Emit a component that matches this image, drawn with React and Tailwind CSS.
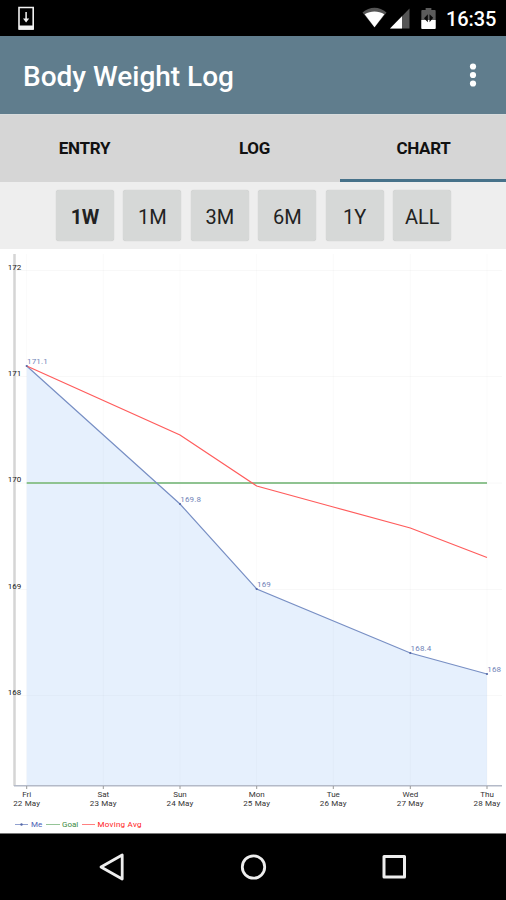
const TABS = ['ENTRY', 'LOG', 'CHART'];
const RANGES = ['1W', '1M', '3M', '6M', '1Y', 'ALL'];

const DAYS = [
    {x: 26.7, day: 'Fri', date: '22 May'},
    {x: 103.3, day: 'Sat', date: '23 May'},
    {x: 180, day: 'Sun', date: '24 May'},
    {x: 256.7, day: 'Mon', date: '25 May'},
    {x: 333.3, day: 'Tue', date: '26 May'},
    {x: 410.3, day: 'Wed', date: '27 May'},
    {x: 487, day: 'Thu', date: '28 May'},
];

const LEVELS = [
    {y: 270.5, label: '172'},
    {y: 376.5, label: '171'},
    {y: 483, label: '170'},
    {y: 589.5, label: '169'},
    {y: 695.5, label: '168'},
];

const WEIGHTS = [
    {x: 26.7, y: 366, label: '171.1'},
    {x: 180, y: 504, label: '169.8'},
    {x: 256.7, y: 589, label: '169'},
    {x: 410.3, y: 653, label: '168.4'},
    {x: 487, y: 674, label: '168'},
];

const LINE = WEIGHTS.map(p => `${p.x},${p.y}`).join(' ');

function StatusBar() {
    return (
        <div className="flex h-[36px] shrink-0 items-center justify-between bg-black pl-[18px] pr-[11px]">
            <svg width="17" height="24" viewBox="0 0 17 24" fill="none">
                <path d="M1 1.500h14.200v21.500H1z" stroke="#f2f2f2" strokeWidth="1.600"/>
                <path d="M1 19.500h14.200v4.200H1z" fill="#f2f2f2"/>
                <path d="M8.100 6v8" stroke="#f2f2f2" strokeWidth="1.500"/>
                <path d="M5 12.600h6.200l-3.100 3.800z" fill="#f2f2f2"/>
            </svg>
            <div className="flex items-center">
                <svg width="25" height="22" viewBox="0 0 26 22">
                    <path d="M0.5 5.4C8-1.2 18-1.2 25.5 5.4L13 21z" fill="#555"/>
                    <path d="M2.800 7.200C9 3.200 17 3.200 23.200 7.200L13 20.5z" fill="#fff"/>
                </svg>
                <svg className="ml-[3px]" width="20" height="21" viewBox="0 0 20 21">
                    <path d="M19.5 0.5v20H0z" fill="#555"/>
                    <path d="M12 8.2v12.3H0z" fill="#fff"/>
                </svg>
                <svg className="ml-[11px]" width="15" height="21" viewBox="0 0 15 22">
                    <path d="M4.5 0h6v2H14q1 0 1 1v18q0 1-1 1H1q-1 0-1-1V3q0-1 1-1h3.500z" fill="#5c5c5c"/>
                    <path d="M0 12.500h15V21q0 1-1 1H1q-1 0-1-1z" fill="#fff"/>
                    <path d="M6.800 6.500v8.500l-4-4.200zM8.600 6.500l3.800 3.800-3.800 4.500z" fill="#0a0a0a"/>
                </svg>
                <span className="ml-[10px] mt-[2px] w-[49px] text-[20px] font-medium leading-none tracking-[-0.1px] text-white">16:35</span>
            </div>
        </div>
    );
}

function Header() {
    return (
        <div className="flex h-[78px] shrink-0 items-center justify-between bg-[#607d8d] pl-[23px] pr-[29px]">
            <h1 className="mt-[4px] text-[28px] font-medium leading-none text-white">Body Weight Log</h1>
            <svg width="8" height="24" viewBox="0 0 8 24" fill="#fff">
                <circle cx="4" cy="3.500" r="3.100"/>
                <circle cx="4" cy="12" r="3.100"/>
                <circle cx="4" cy="20.500" r="3.100"/>
            </svg>
        </div>
    );
}

function Chart() {
    return (
        <svg className="block shrink-0" width="506" height="584" viewBox="0 249 506 584">
            {LEVELS.map(l => (
                <line key={l.label} x1="15" x2="502" y1={l.y} y2={l.y} stroke="#f8f8f8"/>
            ))}
            <polygon points={`26.7,786 ${LINE} 487,786`} fill="#e6f0fd"/>
            {DAYS.map(d => (
                <line key={d.date} x1={d.x} x2={d.x} y1="254" y2="786" stroke="#000" strokeOpacity="0.02"/>
            ))}
            <line x1="27" x2="487" y1="695.5" y2="695.5" stroke="#000" strokeOpacity="0.02"/>

            <line x1="14.500" x2="14.500" y1="254" y2="786" stroke="#d5d5d5" strokeWidth="2.500"/>
            <line x1="14" x2="502" y1="785.800" y2="785.800" stroke="#b4bac8" strokeWidth="1.600"/>
            {DAYS.map(d => (
                <line key={d.date} x1={d.x} x2={d.x} y1="786" y2="789" stroke="#999"/>
            ))}

            <line x1="26.700" x2="487" y1="483" y2="483" stroke="#8fc391" strokeWidth="1.800"/>
            <polyline points={LINE} fill="none" stroke="#788fc4" strokeWidth="1.200"/>
            <polyline points="26.7,366 180,435 256.7,486 333.3,507 410.3,528 487,557.500" fill="none" stroke="#ff5c5c" strokeWidth="1.200"/>
            {WEIGHTS.map(p => (
                <g key={p.label}>
                    <circle cx={p.x} cy={p.y} r="1.100" fill="#5568a8"/>
                    <text x={p.x + 0.3} y={p.y - 2.5} fontSize="8" letterSpacing="0.15" fill="#7183b8">{p.label}</text>
                </g>
            ))}

            <g fontSize="8" fill="#222">
                {LEVELS.map(l => (
                    <text key={l.label} x="7.800" y={l.y - 0.8}>{l.label}</text>
                ))}
            </g>
            <g fontSize="8" fill="#333" textAnchor="middle">
                {DAYS.map(d => (
                    <text key={d.date} x={d.x} y="797">
                        {d.day}
                        <tspan x={d.x} y="806.300" letterSpacing="0.15">{d.date}</tspan>
                    </text>
                ))}
            </g>

            <g fontSize="8">
                <line x1="15" x2="28" y1="824.500" y2="824.500" stroke="#91a1cf"/>
                <circle cx="21.500" cy="824.500" r="1.200" fill="#5568a8"/>
                <text x="31" y="827.300" fill="#4a60b5">Me</text>
                <line x1="46" x2="60" y1="824.500" y2="824.500" stroke="#95c497"/>
                <text x="62" y="827.300" fill="#3b8a3e">Goal</text>
                <line x1="82" x2="95" y1="824.500" y2="824.500" stroke="#ff8080"/>
                <text x="97.500" y="827.300" textLength="44" fill="#ff1818">Moving Avg</text>
            </g>
        </svg>
    );
}

function NavBar() {
    return (
        <div className="flex flex-1 items-center justify-center gap-[113px] border-t border-[#777] bg-black">
            <svg width="28" height="28" viewBox="0 0 28 28" fill="none" stroke="#eee" strokeWidth="2.800" strokeLinejoin="round">
                <path d="M24.200 2v24L3 14z"/>
            </svg>
            <svg width="28" height="28" viewBox="0 0 28 28" fill="none" stroke="#eee" strokeWidth="2.800">
                <circle cx="14.500" cy="14" r="11.200"/>
            </svg>
            <svg width="28" height="28" viewBox="0 0 28 28" fill="none" stroke="#eee" strokeWidth="3" strokeLinejoin="round">
                <rect x="4" y="3.500" width="20.500" height="20.500"/>
            </svg>
        </div>
    );
}

export default function App() {
    return (
        <div className="flex h-[900px] w-[506px] flex-col overflow-hidden bg-white font-[Roboto,sans-serif]">
            <StatusBar/>
            <Header/>
            <div className="flex h-[68px] shrink-0 gap-px border-t border-[#d8dcdd] bg-[#d6d6d6]">
                {TABS.map(tab => (
                    <button
                        key={tab}
                        className={"shrink-0 border-b-[3px] pt-[4px] text-[17px] font-bold tracking-[-0.3px] text-[#111] " + (tab === 'CHART' ? 'w-[167px] border-[#47728a]' : 'w-[169px] border-transparent')}>
                        {tab}
                    </button>
                ))}
            </div>
            <div className="flex h-[67px] shrink-0 items-center justify-center gap-[9.500px] bg-[#eee] pl-px">
                {RANGES.map(range => (
                    <button
                        key={range}
                        className={"h-[51px] w-[58px] rounded-[3px] bg-[#d6d8d7] pt-[2px] text-[20px] text-[#222] shadow-[0_0_1px_#bbb] " + (range === '1W' ? 'font-bold tracking-[-0.4px]' : 'font-normal')}>
                        {range}
                    </button>
                ))}
            </div>
            <Chart/>
            <NavBar/>
        </div>
    );
}
